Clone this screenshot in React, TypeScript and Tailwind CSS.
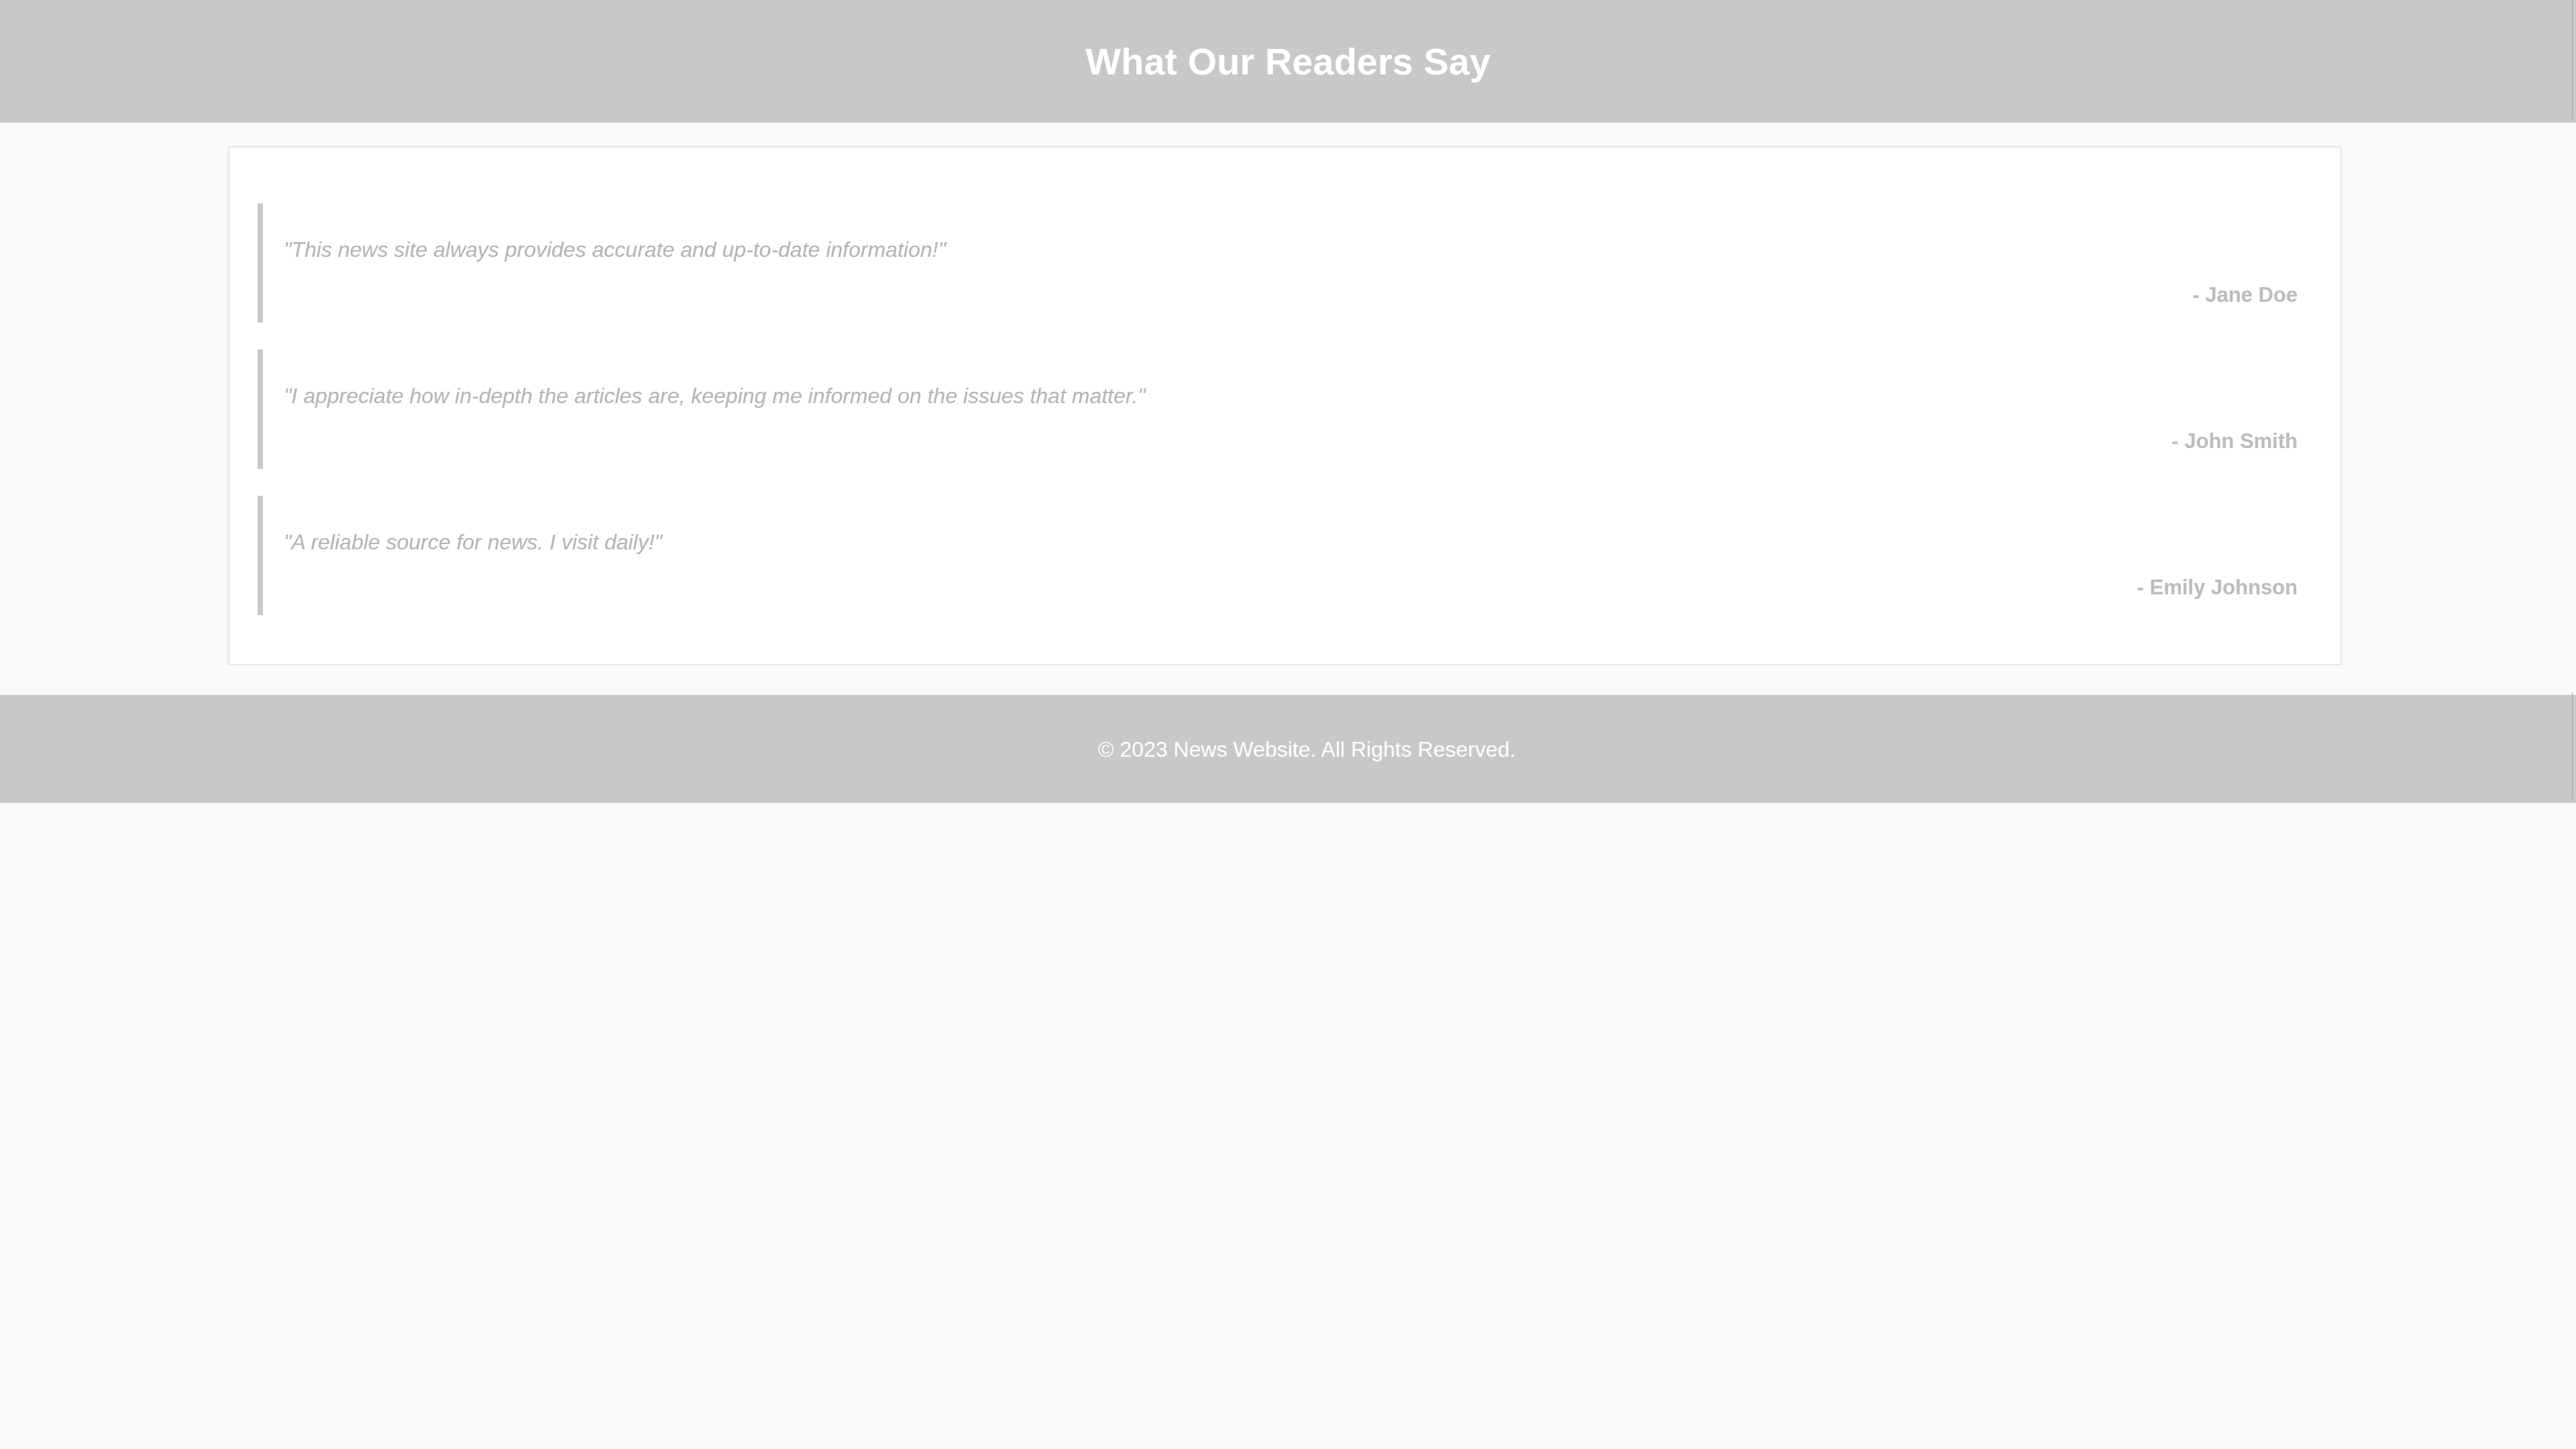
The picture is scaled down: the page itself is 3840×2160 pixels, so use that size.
import React from "react";

const testimonials = [
  { quote: "\"This news site always provides accurate and up-to-date information!\"", name: "- Jane Doe" },
  { quote: "\"I appreciate how in-depth the articles are, keeping me informed on the issues that matter.\"", name: "- John Smith" },
  { quote: "\"A reliable source for news. I visit daily!\"", name: "- Emily Johnson" },
];

export default function App() {
  return (
    <div className="min-h-screen w-full bg-[#fafafa] font-['Liberation_Sans',Arial,sans-serif]">
      <header className="relative flex h-[183px] items-center justify-center bg-[#c8c8c8]">
        <h1 className="text-[56px] font-bold leading-none text-white">What Our Readers Say</h1>
        <div className="absolute right-[5px] top-0 h-[177px] w-px bg-[#a0a0a0]" />
      </header>

      <main className="pt-[35px] pb-[45px]">
        <section className="ml-[340px] w-[3150px] border border-[#dcdcdc] bg-white pl-[43px] pr-[43px] pt-[84px] pb-[73px] shadow-[inset_3px_4px_0_#f6f6f6,0_2px_6px_rgba(0,0,0,0.03)]">
          <div className="flex flex-col gap-[40px]">
            {testimonials.map((t) => (
              <blockquote
                key={t.name}
                className="flex h-[178px] flex-col border-l-[8px] border-[#c8c8c8] pl-[31px] pr-[21px] pt-[45px]"
              >
                <p className="text-[32px] italic leading-[48px] text-[#b4b4b4]">{t.quote}</p>
                <p className="mt-[20px] text-right text-[31px] font-bold leading-[48px] text-[#bcbcbc]">{t.name}</p>
              </blockquote>
            ))}
          </div>
        </section>
      </main>

      <footer className="relative flex h-[161px] items-center justify-center bg-[#c8c8c8] pl-[56px]">
        <p className="text-[32px] leading-none text-white">© 2023 News Website. All Rights Reserved.</p>
        <div className="absolute right-[5px] top-[-4px] h-[159px] w-px bg-[#a0a0a0]" />
      </footer>
    </div>
  );
}
